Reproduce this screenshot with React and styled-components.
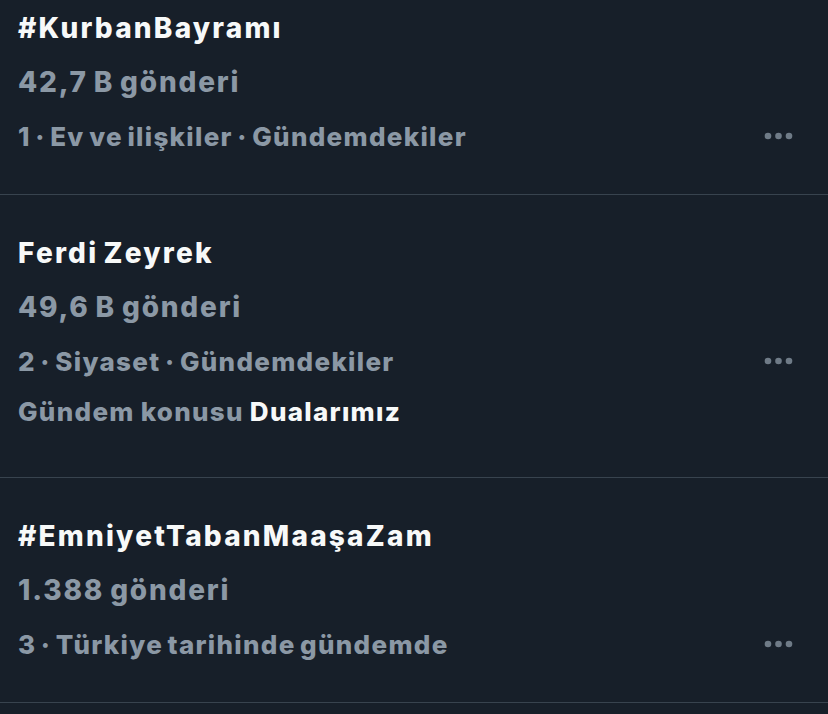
import React from 'react'
import styled, { createGlobalStyle } from 'styled-components'

const GlobalStyle = createGlobalStyle`
  html, body {
    margin: 0;
    padding: 0;
    background: #171f29;
  }
  body {
    font-family: Inter, "Noto Sans", sans-serif;
    -webkit-font-smoothing: antialiased;
  }
`

const List = styled.div`
  width: 828px;
  height: 714px;
  overflow: hidden;
  background: #171f29;
`

const Trend = styled.div`
  padding: 31px 16px 31px 18px;
  border-bottom: 1px solid #38434e;

  &:first-child {
    padding-top: 1px;
  }
`

const Title = styled.div`
  font-size: 28px;
  line-height: 54px;
  font-weight: 800;
  color: #f7f9f9;
  letter-spacing: 2.2px;
  word-spacing: -3px;
`

const Count = styled.div`
  font-size: 28px;
  line-height: 54px;
  font-weight: 800;
  color: #8b98a5;
  letter-spacing: 1.8px;
  word-spacing: -2px;
`

const MetaRow = styled.div`
  display: flex;
  align-items: center;
  justify-content: space-between;
  height: 54px;
`

const Meta = styled.span`
  font-size: 26px;
  font-weight: 800;
  color: #8b98a5;
  letter-spacing: 1.3px;
  word-spacing: -2.5px;
`

const Topic = styled.div`
  font-size: 26px;
  line-height: 48px;
  font-weight: 800;
  color: #8b98a5;
  letter-spacing: 1.3px;
  word-spacing: -1px;
  margin-bottom: 10px;

  strong {
    font-weight: 800;
    color: #f7f9f9;
  }
`

const More = styled.svg`
  width: 30px;
  height: 8px;
  margin-right: 18px;
  fill: #6f7b87;
`

const Dots = () => (
  <More viewBox="0 0 30 8">
    <circle cx="4" cy="4" r="3.3" />
    <circle cx="14.5" cy="4" r="3.3" />
    <circle cx="25" cy="4" r="3.3" />
  </More>
)

const trends = [
  { title: '#KurbanBayramı', count: '42,7 B gönderi', meta: '1 · Ev ve ilişkiler · Gündemdekiler' },
  {
    title: 'Ferdi Zeyrek',
    count: '49,6 B gönderi',
    meta: '2 · Siyaset · Gündemdekiler',
    topic: 'Dualarımız',
  },
  { title: '#EmniyetTabanMaaşaZam', count: '1.388 gönderi', meta: '3 · Türkiye tarihinde gündemde' },
]

export default function App() {
  return (
    <>
      <GlobalStyle />
      <List>
        {trends.map((t) => (
          <Trend key={t.title}>
            <Title>{t.title}</Title>
            <Count>{t.count}</Count>
            <MetaRow>
              <Meta>{t.meta}</Meta>
              <Dots />
            </MetaRow>
            {t.topic && (
              <Topic>
                Gündem konusu <strong>{t.topic}</strong>
              </Topic>
            )}
          </Trend>
        ))}
      </List>
    </>
  )
}
